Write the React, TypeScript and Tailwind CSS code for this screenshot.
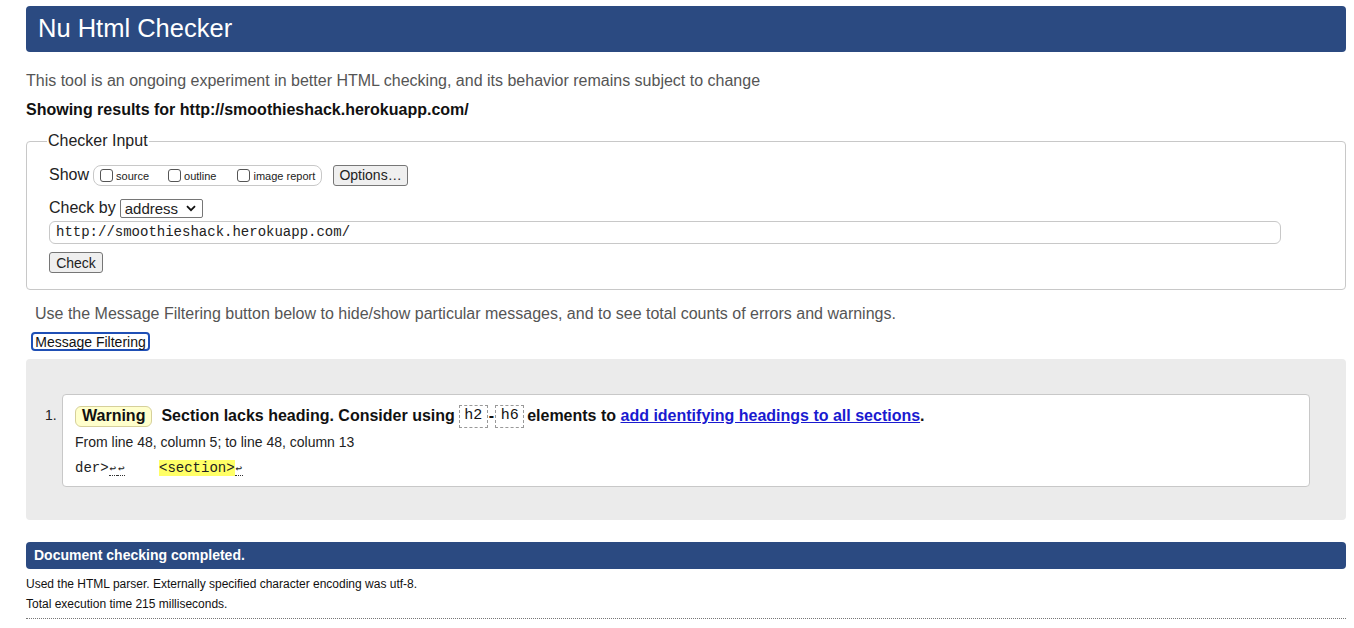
import React from "react";

function Ret() {
  return (
    <span className="inline-block w-[8.4px] text-center text-[11px] leading-none border-b border-dotted border-[#333]">↩</span>
  );
}

function Box({ className = "" }: { className?: string }) {
  return <span className={"block shrink-0 w-[13px] h-[13px] border border-[#555] rounded-[3px] bg-white " + className} />;
}

export default function App() {
  return (
    <div className="w-[1354px] h-[628px] overflow-hidden bg-white text-[#222] font-['Liberation_Sans',Arial,sans-serif] pl-[26px] pr-[8px] pt-[6px]">
      <div className="h-[46px] bg-[#2b4a81] rounded-[4px] flex items-center pl-[12px]">
        <h1 className="text-white text-[25.5px] leading-none">Nu Html Checker</h1>
      </div>

      <p className="mt-[19px] text-[16px] leading-[20px] text-[#555]">
        This tool is an ongoing experiment in better HTML checking, and its behavior remains subject to change
      </p>
      <p className="mt-[9px] text-[16px] leading-[20px] font-bold text-[#111]">
        Showing results for http://smoothieshack.herokuapp.com/
      </p>

      <fieldset className="mt-[12px] border border-[#c8c8c8] rounded-[4px] pl-[22px] pr-[8px] h-[158px]">
        <legend className="text-[16px] leading-[18px] ml-[-2px] px-[1px] text-[#222]">Checker Input</legend>
        <div className="flex items-center mt-[14px] h-[22px]">
          <span className="text-[16px] mr-[4px]">Show</span>
          <div className="flex items-center h-[21px] border border-[#c8c8c8] rounded-[8px] pl-[6px] w-[229px] whitespace-nowrap">
            <Box />
            <span className="text-[11px] ml-[3px] mt-[2px]">source</span>
            <Box className="ml-[19px]" />
            <span className="text-[11px] ml-[3px] mt-[2px]">outline</span>
            <Box className="ml-[21px]" />
            <span className="text-[11px] ml-[3px] mt-[2px]">image report</span>
          </div>
          <button className="ml-[11px] h-[21px] w-[75px] bg-[#efefef] border border-[#767676] rounded-[3px] text-[14px] leading-none">Options…</button>
        </div>
        <div className="flex items-center mt-[12px] h-[20px]">
          <span className="text-[16px] mr-[4px]">Check by</span>
          <div className="w-[83px] h-[19px] border border-[#767676] rounded-[2px] flex items-center justify-between pl-[4px] pr-[6px] bg-white">
            <span className="text-[15px] leading-none">address</span>
            <svg width="10" height="7" viewBox="0 0 10 7"><path d="M1 1.2 L5 5.2 L9 1.2" fill="none" stroke="#111" strokeWidth="1.8" /></svg>
          </div>
        </div>
        <div className="mt-[3px] w-[1232px] h-[23px] border border-[#c8c8c8] rounded-[6px] flex items-center pl-[6px] font-['Liberation_Mono',monospace] text-[14px]">
          http://smoothieshack.herokuapp.com/
        </div>
        <button className="block mt-[8px] w-[54px] h-[21px] bg-[#efefef] border border-[#767676] rounded-[3px] text-[14px] leading-none">Check</button>
      </fieldset>

      <p className="mt-[14px] ml-[9px] text-[16px] leading-[20px] text-[#555]">
        Use the Message Filtering button below to hide/show particular messages, and to see total counts of errors and warnings.
      </p>
      <button className="block mt-[8px] ml-[5px] w-[119px] h-[19px] border-2 border-[#1f4fb5] rounded-[4px] text-[14px] leading-none bg-white text-[#111]">Message Filtering</button>

      <div className="mt-[8px] h-[161px] bg-[#ebebeb] rounded-[4px] pt-[35px] pl-[19px] pr-[36px]">
        <div className="flex">
          <span className="text-[14px] leading-[20px] w-[17px] mt-[11px]">1.</span>
          <div className="flex-1 h-[93px] bg-white border border-[#c8c8c8] rounded-[4px] pl-[12px] pt-[10px]">
            <div className="flex items-center text-[16px] font-bold text-[#111] h-[22px]">
              <span className="h-[21px] px-[6px] flex items-center bg-[#ffffcc] border border-[#d6d09a] rounded-[6px]">Warning</span>
              <span className="ml-[9px]">Section lacks heading. Consider using</span>
              <code className="ml-[4px] w-[29px] justify-center font-['Liberation_Mono',monospace] font-normal text-[15px] border border-dashed border-[#999] h-[23px] flex items-center">h2</code>
              <span className="mx-[1px]">-</span>
              <code className="w-[29px] justify-center font-['Liberation_Mono',monospace] font-normal text-[15px] border border-dashed border-[#999] h-[23px] flex items-center">h6</code>
              <span className="ml-[3px]">elements to&nbsp;</span>
              <a className="text-[#1a1ad0] underline">add identifying headings to all sections</a>
              <span>.</span>
            </div>
            <p className="mt-[6px] text-[14px] leading-[18px]">From line 48, column 5; to line 48, column 13</p>
            <p className="mt-[8px] text-[14px] leading-[18px] font-['Liberation_Mono',monospace] whitespace-pre">
              der&gt;<Ret /><Ret />{"    "}<span className="bg-[#ffff66]">&lt;section&gt;</span><Ret />
            </p>
          </div>
        </div>
      </div>

      <div className="mt-[22px] h-[27px] bg-[#2b4a81] rounded-[4px] flex items-center pl-[8px]">
        <span className="text-white text-[14px] font-bold">Document checking completed.</span>
      </div>
      <p className="mt-[7px] text-[12px] leading-[16px] text-[#111]">Used the HTML parser. Externally specified character encoding was utf-8.</p>
      <p className="mt-[4px] text-[12px] leading-[16px] text-[#111]">Total execution time 215 milliseconds.</p>
      <div className="mt-[6px] border-t border-dotted border-[#777]" />
    </div>
  );
}
